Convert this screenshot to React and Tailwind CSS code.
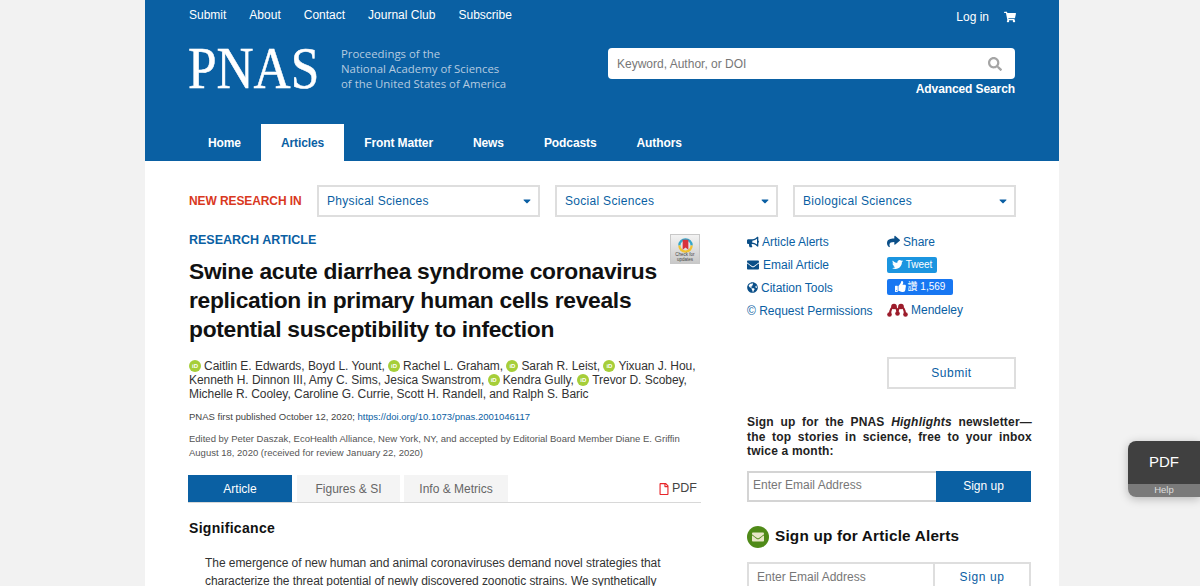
import React from "react";
import { FaShoppingCart, FaSearch, FaBullhorn, FaEnvelope, FaGlobeAmericas, FaShare, FaTwitter, FaThumbsUp, FaRegFile, FaCaretDown } from "react-icons/fa";

const sans = "font-['Liberation_Sans','Noto_Sans_CJK_TC',Arial,sans-serif]";

const Orcid = () => (
  <span className="mr-[3px] inline-grid h-[12px] w-[12px] translate-y-[-1px] place-items-center rounded-full bg-[#a6ce39] align-middle text-[6px] font-bold leading-none text-white">iD</span>
);

const Pick = ({ label }) => (
  <div className="flex h-[32px] w-[223px] items-center justify-between border-2 border-[#dedede] bg-white pl-2 pr-[5px] text-[12px] tracking-[0.3px] text-[#0a5fa3]">
    <span>{label}</span>
    <FaCaretDown className="text-[12px]" />
  </div>
);

const Mendeley = () => (
  <svg width="21" height="14" viewBox="0 0 21 14" fill="#9c1c2b">
    <path d="M3 11C3.500 5 6 4 7 4M18 11C17.500 5 15 4 14 4M7 4C8.500 4 10 6 10.500 9C11 6 12.500 4 14 4" fill="none" stroke="#9c1c2b" strokeWidth="2.200" />
    <circle cx="7" cy="3.500" r="2.800" />
    <circle cx="14" cy="3.500" r="2.800" />
    <circle cx="2.500" cy="11.500" r="2.300" />
    <circle cx="10.500" cy="10.500" r="2.300" />
    <circle cx="18.500" cy="11.500" r="2.300" />
  </svg>
);

const Updates = () => (
  <div className="flex h-[30px] w-[30px] flex-col items-center border border-[#c8c8c8] bg-gradient-to-b from-[#f3f3f3] to-[#c9c9c9] pt-[2px]">
    <svg width="17" height="17" viewBox="0 0 18 18" className="shrink-0">
      <path d="M2.500 9a6.500 6.500 0 0 1 13 0" fill="none" stroke="#35a6c9" strokeWidth="2.4" />
      <path d="M15.500 9a6.500 6.500 0 0 1-13 0" fill="none" stroke="#f2c230" strokeWidth="2.4" />
      <path d="M6 3h6v10.500L9 11l-3 2.500z" fill="#d8323c" />
    </svg>
    <span className="mt-[-2px] text-center text-[4.500px] leading-[5px] text-[#444]">Check for updates</span>
  </div>
);

export default function App() {
  return (
    <div className={`relative h-[586px] overflow-hidden bg-[#f2f2f2] ${sans}`}>
      <div className="ml-[145px] h-full w-[914px] bg-white">
        <header className="h-[161px] bg-[#0a60a3] text-white">
          <div className="flex h-[25px] items-start justify-between pl-[44px] pr-[43px]">
            <nav className="flex gap-[23px] pt-[7px] text-[12px] leading-[16px]">
              <span>Submit</span>
              <span>About</span>
              <span>Contact</span>
              <span>Journal Club</span>
              <span>Subscribe</span>
            </nav>
            <div className="flex items-center gap-[15px] pt-[9px] text-[12px] leading-[16px]">
              <span>Log in</span>
              <FaShoppingCart className="text-[12px]" />
            </div>
          </div>

          <div className="flex justify-between px-[44px] pt-[23px]">
            <div className="flex">
              <div className="-ml-[1px] -mt-[2px] h-[44px] w-[153px] origin-left scale-x-[0.87] font-['Liberation_Serif',serif] text-[59px] leading-[44px] [-webkit-text-stroke:0.5px_white]">PNAS</div>
              <div className="-mt-[2px] font-['Open_Sans',sans-serif] text-[11.400px] leading-[15px] text-[#b5cbe0]">
                Proceedings of the<br />National Academy of Sciences<br />of the United States of America
              </div>
            </div>
            <div className="w-[407px]">
              <div className="flex h-[31px] items-center justify-between rounded-[4px] bg-white pl-[9px] pr-[13px] text-[12px] text-[#777]">
                <span>Keyword, Author, or DOI</span>
                <FaSearch className="text-[14px] text-[#a5a5a5]" />
              </div>
              <div className="mt-[2px] text-right text-[12px] font-bold leading-[16px] tracking-[-0.1px]">Advanced Search</div>
            </div>
          </div>

          <nav className="mt-[27px] flex pl-[43px] text-[12px] font-bold tracking-[-0.1px]">
            <span className="flex h-[37px] items-center px-[20px]">Home</span>
            <span className="flex h-[37px] items-center bg-white px-[20px] text-[#0a60a3]">Articles</span>
            <span className="flex h-[37px] items-center px-[20px]">Front Matter</span>
            <span className="flex h-[37px] items-center px-[20px]">News</span>
            <span className="flex h-[37px] items-center px-[20px]">Podcasts</span>
            <span className="flex h-[37px] items-center px-[20px]">Authors</span>
          </nav>
        </header>

        <div className="flex items-center pl-[44px] pt-[24px]">
          <div className="w-[128px] text-[12px] font-bold tracking-[-0.1px] text-[#d9381e]">NEW RESEARCH IN</div>
          <div className="flex gap-[15px]">
            <Pick label="Physical Sciences" />
            <Pick label="Social Sciences" />
            <Pick label="Biological Sciences" />
          </div>
        </div>

        <div className="flex pl-[44px] pt-[15px]">
          <main className="w-[512px]">
            <div className="flex justify-between">
              <div className="w-[480px]">
                <div className="text-[12.500px] font-bold leading-[16px] text-[#0a60a3]">RESEARCH ARTICLE</div>
                <h1 className="mt-[9px] text-[22.800px] font-bold leading-[29px] tracking-[-0.300px] text-[#111]">
                  Swine acute diarrhea syndrome coronavirus replication in primary human cells reveals potential susceptibility to infection
                </h1>
              </div>
              <div className="mr-[1px] pt-[2px]"><Updates /></div>
            </div>

            <p className="mt-[15px] text-[12px] leading-[14px] tracking-[-0.04px] text-[#333]">
              <Orcid />Caitlin E. Edwards, Boyd L. Yount, <Orcid />Rachel L. Graham, <Orcid />Sarah R. Leist, <Orcid />Yixuan J. Hou,<br />
              Kenneth H. Dinnon III, Amy C. Sims, Jesica Swanstrom, <Orcid />Kendra Gully, <Orcid />Trevor D. Scobey,<br />
              Michelle R. Cooley, Caroline G. Currie, Scott H. Randell, and Ralph S. Baric
            </p>
            <p className="mt-[9px] text-[9.500px] leading-[14px] text-[#444]">
              PNAS first published October 12, 2020; <span className="text-[#0a60a3]">https://doi.org/10.1073/pnas.2001046117</span>
            </p>
            <p className="mt-[8px] text-[9.500px] leading-[14px] text-[#555]">
              Edited by Peter Daszak, EcoHealth Alliance, New York, NY, and accepted by Editorial Board Member Diane E. Griffin<br />
              August 18, 2020 (received for review January 22, 2020)
            </p>

            <div className="ml-[-1px] mt-[15px] flex h-[28px] w-[513px] border-b border-[#d8d8d8] text-[12px]">
              <span className="flex h-[27px] w-[104px] items-center justify-center bg-[#0a60a3] text-white">Article</span>
              <span className="ml-[5px] flex h-[27px] w-[103px] items-center justify-center bg-[#f4f4f4] text-[#666]">Figures &amp; SI</span>
              <span className="ml-[4px] flex h-[27px] w-[104px] items-center justify-center bg-[#f4f4f4] text-[#666]">Info &amp; Metrics</span>
              <span className="ml-auto flex h-[27px] items-center gap-[2px] pr-[4px] text-[12.500px] text-[#444]">
                <FaRegFile className="text-[12px] text-[#e8262a]" />PDF
              </span>
            </div>

            <h2 className="mt-[16px] text-[14px] font-bold leading-[18px] tracking-[0.300px] text-[#111]">Significance</h2>
            <p className="mt-[17px] pl-[16px] text-[12px] leading-[18px] tracking-[-0.06px] text-[#333]">
              The emergence of new human and animal coronaviruses demand novel strategies that characterize the threat potential of newly discovered zoonotic strains. We synthetically
            </p>
          </main>

          <aside className="-mt-[2px] ml-[46px] w-[285px]">
            <div className="flex text-[12px] text-[#0a60a3]">
              <div className="w-[140px]">
                <div className="flex h-[23px] items-center gap-[3px]"><FaBullhorn className="text-[12px] text-[#0b4f88]" />Article Alerts</div>
                <div className="flex h-[23px] items-center gap-[4px]"><FaEnvelope className="text-[12px] text-[#0b4f88]" />Email Article</div>
                <div className="flex h-[23px] items-center gap-[3px]"><FaGlobeAmericas className="text-[11px] text-[#0b4f88]" />Citation Tools</div>
                <div className="flex h-[23px] items-center">© Request Permissions</div>
              </div>
              <div>
                <div className="flex h-[23px] items-center gap-[3px]"><FaShare className="text-[13px] text-[#0b4f88]" />Share</div>
                <div className="flex h-[23px] items-center">
                  <span className="flex h-[16px] w-[50px] items-center justify-center gap-[3px] rounded-[2px] bg-[#1b95e0] text-[10px] text-white"><FaTwitter className="text-[11px]" />Tweet</span>
                </div>
                <div className="flex h-[21px] items-center">
                  <span className="flex h-[16px] w-[66px] items-center justify-center gap-[2px] rounded-[2px] bg-[#1877f2] text-[10px] text-white"><FaThumbsUp className="text-[11px]" />讚 1,569</span>
                </div>
                <div className="flex h-[26px] items-center gap-[3px]"><Mendeley />Mendeley</div>
              </div>
            </div>

            <div className="ml-[140px] mt-[34px] flex h-[32px] w-[129px] items-center justify-center border-2 border-[#dedede] text-[12px] tracking-[0.5px] text-[#0a60a3]">Submit</div>

            <p className="mt-[26px] w-[285px] text-justify text-[12px] font-bold leading-[14.500px] tracking-[0.2px] text-[#222]">
              Sign up for the PNAS <em>Highlights</em> newsletter—the top stories in science, free to your inbox twice a month:
            </p>

            <div className="mt-[12px] flex h-[31px] w-[284px]">
              <div className="flex flex-1 items-center border-2 border-r-0 border-[#d4d4d4] pb-[2px] pl-[4px] text-[12px] text-[#777]">Enter Email Address</div>
              <div className="flex w-[95px] items-center justify-center bg-[#0a60a3] pb-[1px] text-[12px] font-medium text-white">Sign up</div>
            </div>

            <div className="mt-[24.500px] flex items-center gap-[6px]">
              <span className="grid h-[22px] w-[22px] place-items-center rounded-full bg-[#4f8a18]"><FaEnvelope className="text-[12px] text-[#e8e6c8]" /></span>
              <span className="pb-[2px] text-[15.300px] font-bold leading-[20px] tracking-[0.2px] text-[#111]">Sign up for Article Alerts</span>
            </div>

            <div className="mt-[14px] flex h-[31px] w-[284px] text-[12px]">
              <div className="flex flex-1 items-center border-2 border-[#dedede] pb-[2px] pl-[8px] text-[#777]">Enter Email Address</div>
              <div className="flex w-[96px] items-center justify-center border-2 border-l-0 border-[#dedede] pb-[1px] tracking-[0.6px] text-[#0a60a3]">Sign up</div>
            </div>
          </aside>
        </div>
      </div>

      <div className="absolute left-[1128px] top-[441px] w-[72px] overflow-hidden rounded-l-[8px] shadow-[0_2px_10px_rgba(0,0,0,0.25)]">
        <div className="flex h-[43px] items-center justify-center bg-[#404040] text-[15px] text-white">PDF</div>
        <div className="flex h-[13px] items-center justify-center bg-[#7a7a7a] text-[9.500px] text-[#ddd]">Help</div>
      </div>
    </div>
  );
}
